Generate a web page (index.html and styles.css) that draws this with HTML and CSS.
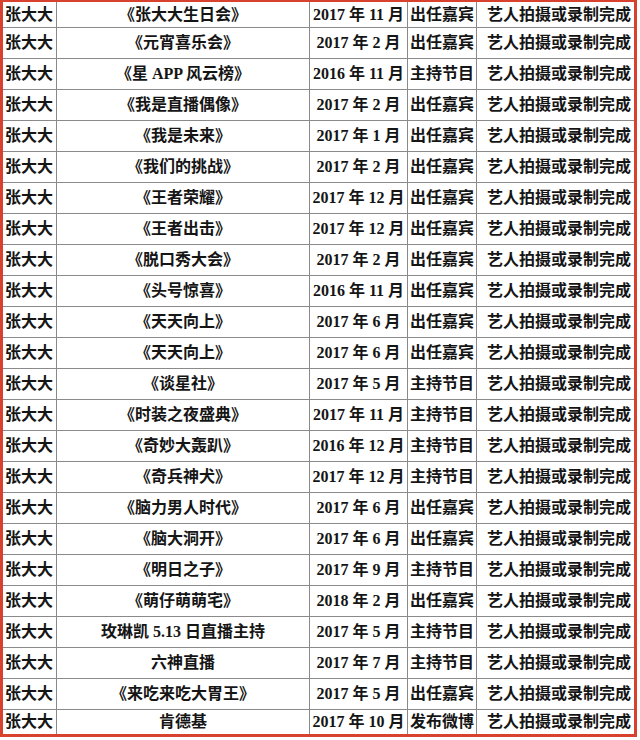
FILE: index.html
```html
<!DOCTYPE html>
<html lang="zh">
<head>
<meta charset="utf-8">
<link rel="stylesheet" href="styles.css">
</head>
<body>
<div class="frame">
  <div class="row"><div class="c name">张大大</div><div class="c show">《张大大生日会》</div><div class="c date">2017 年 11 月</div><div class="c role">出任嘉宾</div><div class="c status">艺人拍摄或录制完成</div></div>
  <div class="row"><div class="c name">张大大</div><div class="c show">《元宵喜乐会》</div><div class="c date">2017 年 2 月</div><div class="c role">出任嘉宾</div><div class="c status">艺人拍摄或录制完成</div></div>
  <div class="row"><div class="c name">张大大</div><div class="c show">《星 APP 风云榜》</div><div class="c date">2016 年 11 月</div><div class="c role">主持节目</div><div class="c status">艺人拍摄或录制完成</div></div>
  <div class="row"><div class="c name">张大大</div><div class="c show">《我是直播偶像》</div><div class="c date">2017 年 2 月</div><div class="c role">出任嘉宾</div><div class="c status">艺人拍摄或录制完成</div></div>
  <div class="row"><div class="c name">张大大</div><div class="c show">《我是未来》</div><div class="c date">2017 年 1 月</div><div class="c role">出任嘉宾</div><div class="c status">艺人拍摄或录制完成</div></div>
  <div class="row"><div class="c name">张大大</div><div class="c show">《我们的挑战》</div><div class="c date">2017 年 2 月</div><div class="c role">出任嘉宾</div><div class="c status">艺人拍摄或录制完成</div></div>
  <div class="row"><div class="c name">张大大</div><div class="c show">《王者荣耀》</div><div class="c date">2017 年 12 月</div><div class="c role">出任嘉宾</div><div class="c status">艺人拍摄或录制完成</div></div>
  <div class="row"><div class="c name">张大大</div><div class="c show">《王者出击》</div><div class="c date">2017 年 12 月</div><div class="c role">出任嘉宾</div><div class="c status">艺人拍摄或录制完成</div></div>
  <div class="row"><div class="c name">张大大</div><div class="c show">《脱口秀大会》</div><div class="c date">2017 年 2 月</div><div class="c role">出任嘉宾</div><div class="c status">艺人拍摄或录制完成</div></div>
  <div class="row"><div class="c name">张大大</div><div class="c show">《头号惊喜》</div><div class="c date">2016 年 11 月</div><div class="c role">出任嘉宾</div><div class="c status">艺人拍摄或录制完成</div></div>
  <div class="row"><div class="c name">张大大</div><div class="c show">《天天向上》</div><div class="c date">2017 年 6 月</div><div class="c role">出任嘉宾</div><div class="c status">艺人拍摄或录制完成</div></div>
  <div class="row"><div class="c name">张大大</div><div class="c show">《天天向上》</div><div class="c date">2017 年 6 月</div><div class="c role">出任嘉宾</div><div class="c status">艺人拍摄或录制完成</div></div>
  <div class="row"><div class="c name">张大大</div><div class="c show">《谈星社》</div><div class="c date">2017 年 5 月</div><div class="c role">主持节目</div><div class="c status">艺人拍摄或录制完成</div></div>
  <div class="row"><div class="c name">张大大</div><div class="c show">《时装之夜盛典》</div><div class="c date">2017 年 11 月</div><div class="c role">主持节目</div><div class="c status">艺人拍摄或录制完成</div></div>
  <div class="row"><div class="c name">张大大</div><div class="c show">《奇妙大轰趴》</div><div class="c date">2016 年 12 月</div><div class="c role">主持节目</div><div class="c status">艺人拍摄或录制完成</div></div>
  <div class="row"><div class="c name">张大大</div><div class="c show">《奇兵神犬》</div><div class="c date">2017 年 12 月</div><div class="c role">主持节目</div><div class="c status">艺人拍摄或录制完成</div></div>
  <div class="row"><div class="c name">张大大</div><div class="c show">《脑力男人时代》</div><div class="c date">2017 年 6 月</div><div class="c role">出任嘉宾</div><div class="c status">艺人拍摄或录制完成</div></div>
  <div class="row"><div class="c name">张大大</div><div class="c show">《脑大洞开》</div><div class="c date">2017 年 6 月</div><div class="c role">出任嘉宾</div><div class="c status">艺人拍摄或录制完成</div></div>
  <div class="row"><div class="c name">张大大</div><div class="c show">《明日之子》</div><div class="c date">2017 年 9 月</div><div class="c role">主持节目</div><div class="c status">艺人拍摄或录制完成</div></div>
  <div class="row"><div class="c name">张大大</div><div class="c show">《萌仔萌萌宅》</div><div class="c date">2018 年 2 月</div><div class="c role">出任嘉宾</div><div class="c status">艺人拍摄或录制完成</div></div>
  <div class="row"><div class="c name">张大大</div><div class="c show">玫琳凯 5.13 日直播主持</div><div class="c date">2017 年 5 月</div><div class="c role">主持节目</div><div class="c status">艺人拍摄或录制完成</div></div>
  <div class="row"><div class="c name">张大大</div><div class="c show">六神直播</div><div class="c date">2017 年 7 月</div><div class="c role">主持节目</div><div class="c status">艺人拍摄或录制完成</div></div>
  <div class="row"><div class="c name">张大大</div><div class="c show">《来吃来吃大胃王》</div><div class="c date">2017 年 5 月</div><div class="c role">出任嘉宾</div><div class="c status">艺人拍摄或录制完成</div></div>
  <div class="row"><div class="c name">张大大</div><div class="c show">肯德基</div><div class="c date">2017 年 10 月</div><div class="c role">发布微博</div><div class="c status">艺人拍摄或录制完成</div></div>
</div>
</body>
</html>
```

FILE: styles.css
```css
html, body {
  margin: 0;
  padding: 0;
  background: #ffffff;
}

.frame {
  box-sizing: border-box;
  width: 637px;
  border-left: 3px solid #d8412e;
  border-right: 3px solid #d8412e;
  border-top: 2px solid #d8412e;
  border-bottom: 3px solid #d8412e;
  font-family: "Liberation Serif", "Noto Sans CJK SC", serif;
  font-weight: 700;
  font-size: 16px;
  color: #151515;
}

.row {
  display: grid;
  grid-template-columns: 54px 253px 98px 69px 157px;
  height: 31px;
  box-sizing: border-box;
  border-bottom: 1px solid #8a8a8a;
}

.row:first-child {
  height: 26px;
}

.row:last-child {
  height: 24px;
  border-bottom: none;
}

.c {
  box-sizing: border-box;
  border-right: 1px solid #8a8a8a;
  display: flex;
  align-items: center;
  justify-content: center;
  white-space: nowrap;
  line-height: 1;
}

.c.status {
  border-right: none;
  justify-content: flex-start;
  padding-left: 10px;
}

.c.name {
  justify-content: flex-start;
  padding-left: 2px;
}
```
